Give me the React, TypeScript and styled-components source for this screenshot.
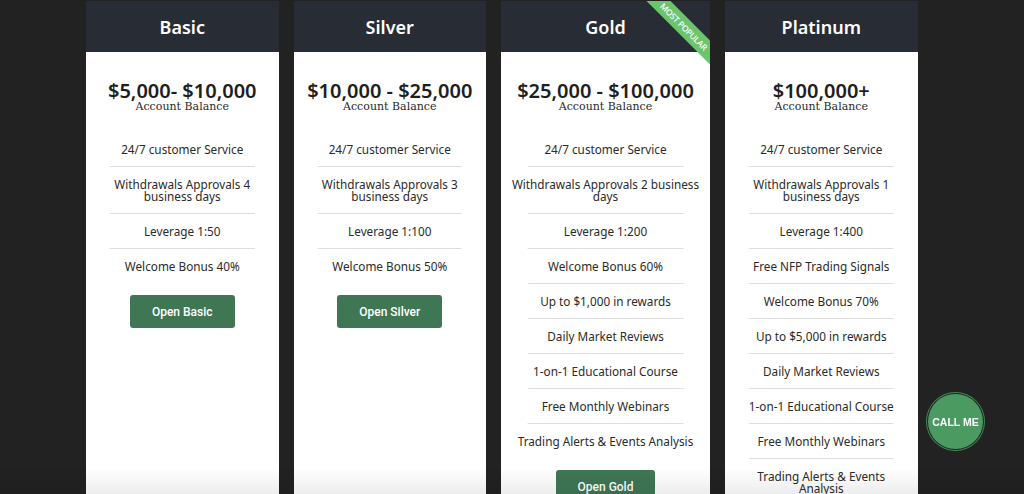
import styled, { createGlobalStyle } from 'styled-components'

const GlobalStyle = createGlobalStyle`
  html, body {
    margin: 0;
    padding: 0;
    background: #222222;
    height: 100%;
    overflow: hidden;
  }
  * {
    box-sizing: border-box;
  }
`

type Plan = {
  name: string
  price: string
  features: string[]
  wide?: boolean
  popular?: boolean
}

const plans: Plan[] = [
  {
    name: 'Basic',
    price: '$5,000- $10,000',
    features: ['24/7 customer Service', 'Withdrawals Approvals 4 business days', 'Leverage 1:50', 'Welcome Bonus 40%'],
  },
  {
    name: 'Silver',
    price: '$10,000 - $25,000',
    features: ['24/7 customer Service', 'Withdrawals Approvals 3 business days', 'Leverage 1:100', 'Welcome Bonus 50%'],
  },
  {
    name: 'Gold',
    price: '$25,000 - $100,000',
    wide: true,
    popular: true,
    features: [
      '24/7 customer Service',
      'Withdrawals Approvals 2 business days',
      'Leverage 1:200',
      'Welcome Bonus 60%',
      'Up to $1,000 in rewards',
      'Daily Market Reviews',
      '1-on-1 Educational Course',
      'Free Monthly Webinars',
      'Trading Alerts & Events Analysis',
    ],
  },
  {
    name: 'Platinum',
    price: '$100,000+',
    features: [
      '24/7 customer Service',
      'Withdrawals Approvals 1 business days',
      'Leverage 1:400',
      'Free NFP Trading Signals',
      'Welcome Bonus 70%',
      'Up to $5,000 in rewards',
      'Daily Market Reviews',
      '1-on-1 Educational Course',
      'Free Monthly Webinars',
      'Trading Alerts & Events Analysis',
    ],
  },
]

const Root = styled.div`
  display: flex;
  align-items: flex-start;
  gap: 15px;
  padding: 1px 0 0 86px;
  height: 494px;
  overflow: hidden;
`

const Card = styled.div<{ $wide?: boolean }>`
  position: relative;
  flex: none;
  width: ${(p) => (p.$wide ? '209px' : '192.5px')};
  min-height: 600px;
  background: #ffffff;
  overflow: hidden;
  font-family: 'Noto Sans', 'Open Sans', sans-serif;
`

const Header = styled.div`
  height: 51px;
  background: #282c34;
  color: #ffffff;
  display: flex;
  align-items: center;
  justify-content: center;
  font-size: 18px;
  font-weight: 600;
`

const Ribbon = styled.div`
  position: absolute;
  top: 17px;
  right: -29px;
  width: 110px;
  height: 17px;
  background: #6cc46c;
  color: #ffffff;
  font-size: 8.5px;
  font-weight: 500;
  line-height: 17px;
  text-align: center;
  letter-spacing: -0.2px;
  transform: rotate(45deg);
`

const PriceBlock = styled.div`
  padding: 27px 0 19px;
  text-align: center;
`

const Price = styled.div`
  font-size: 20px;
  font-weight: 600;
  line-height: 24px;
  color: #1e1e1e;
`

const Caption = styled.div`
  font-family: 'DejaVu Serif', 'Liberation Serif', serif;
  font-size: 11px;
  line-height: 12px;
  margin-top: -2px;
  color: #2a2a2a;
`

const Features = styled.ul`
  list-style: none;
  margin: 0;
  padding: 0 9px;
`

const Feature = styled.li`
  position: relative;
  padding: 11px 0 12px;
  font-size: 11.75px;
  line-height: 12px;
  color: #2b2b2b;
  text-align: center;

  &:not(:last-child)::after {
    content: '';
    position: absolute;
    bottom: 0;
    left: 50%;
    width: calc((100% + 18px) * 0.75);
    transform: translateX(-50%);
    height: 1px;
    background: #dddddd;
  }
`

const ButtonRow = styled.div`
  display: flex;
  justify-content: center;
  padding-top: 11px;
`

const OpenButton = styled.button`
  height: 33px;
  padding: 0 22px;
  border: none;
  border-radius: 3px;
  background: #3f7755;
  color: #ffffff;
  font-family: Roboto, 'Noto Sans', sans-serif;
  font-size: 12px;
  font-weight: 500;
  cursor: pointer;
`

const BottomFade = styled.div`
  position: fixed;
  left: 0;
  right: 0;
  bottom: 0;
  height: 26px;
  pointer-events: none;
  background: linear-gradient(to bottom, rgba(0, 0, 0, 0), rgba(0, 0, 0, 0.07));
`

const CallMe = styled.button`
  position: fixed;
  left: 928px;
  top: 394px;
  width: 55px;
  height: 55px;
  border-radius: 50%;
  border: none;
  background: #4b9a62;
  box-shadow: 0 0 0 1px #222222, 0 0 0 2px #3f8a55;
  color: #ffffff;
  font-family: 'Liberation Sans', Arial, sans-serif;
  font-size: 10.5px;
  font-weight: 700;
  padding: 0;
  cursor: pointer;
`

export default function App() {
  return (
    <>
      <GlobalStyle />
      <Root>
        {plans.map((plan) => (
          <Card key={plan.name} $wide={plan.wide}>
            <Header>{plan.name}</Header>
            {plan.popular && <Ribbon>MOST POPULAR</Ribbon>}
            <PriceBlock>
              <Price>{plan.price}</Price>
              <Caption>Account Balance</Caption>
            </PriceBlock>
            <Features>
              {plan.features.map((f) => (
                <Feature key={f}>{f}</Feature>
              ))}
            </Features>
            <ButtonRow>
              <OpenButton type="button">Open {plan.name}</OpenButton>
            </ButtonRow>
          </Card>
        ))}
      </Root>
      <BottomFade />
      <CallMe type="button">CALL ME</CallMe>
    </>
  )
}
